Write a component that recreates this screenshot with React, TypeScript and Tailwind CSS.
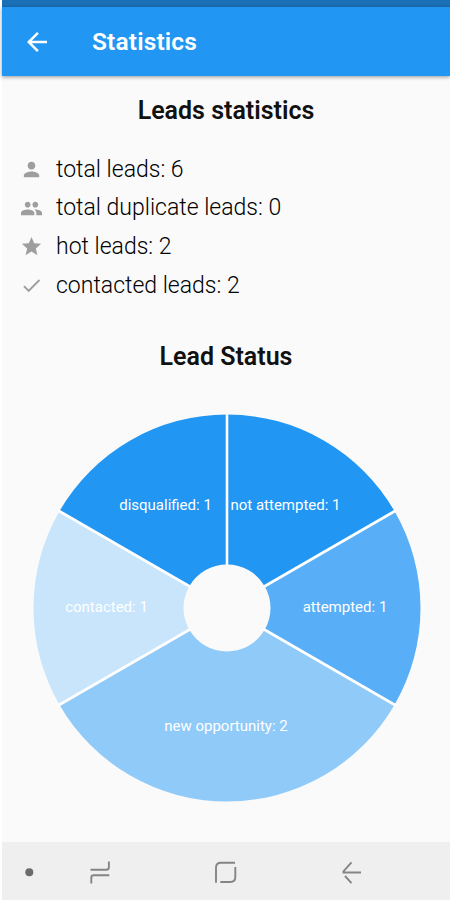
import type { IconType } from "react-icons";
import { MdArrowBack, MdCheck, MdPeople, MdPerson, MdStar } from "react-icons/md";

type Stat = { icon: IconType; label: string; value: number };

const stats: Stat[] = [
  { icon: MdPerson, label: "total leads", value: 6 },
  { icon: MdPeople, label: "total duplicate leads", value: 0 },
  { icon: MdStar, label: "hot leads", value: 2 },
  { icon: MdCheck, label: "contacted leads", value: 2 },
];

const slices = [
  { label: "not attempted", value: 1, color: "#2196f3", x: 285.5, y: 504.5 },
  { label: "attempted", value: 1, color: "#58aef7", x: 345, y: 607 },
  { label: "new opportunity", value: 2, color: "#90caf9", x: 226, y: 726 },
  { label: "contacted", value: 1, color: "#c8e5fc", x: 106.5, y: 607 },
  { label: "disqualified", value: 1, color: "#2196f3", x: 165.5, y: 504.5 },
];

const CX = 227;
const CY = 608;
const OUTER = 193.5;
const INNER = 43.5;

function point(radius: number, turn: number) {
  const a = turn * 2 * Math.PI - Math.PI / 2;
  return `${(CX + radius * Math.cos(a)).toFixed(2)} ${(CY + radius * Math.sin(a)).toFixed(2)}`;
}

function LeadStatusChart() {
  const total = slices.reduce((sum, s) => sum + s.value, 0);
  let turn = 0;
  const parts = slices.map((s) => {
    const start = turn;
    turn += s.value / total;
    return { ...s, start, end: turn };
  });

  return (
    <svg className="block h-[400px] w-full" viewBox="0 408 450 400">
      {parts.map((p) => (
        <path
          key={p.label}
          fill={p.color}
          d={`M${point(OUTER, p.start)} A${OUTER} ${OUTER} 0 0 1 ${point(OUTER, p.end)} L${point(INNER, p.end)} A${INNER} ${INNER} 0 0 0 ${point(INNER, p.start)} Z`}
        />
      ))}
      {parts.map((p) => (
        <path key={p.label} d={`M${point(INNER - 1, p.start)} L${point(OUTER + 1, p.start)}`} stroke="#fff" strokeWidth="2.6" />
      ))}
      {parts.map((p) => (
        <text key={p.label} x={p.x} y={p.y} fill="#fff" textAnchor="middle" dominantBaseline="central" className="text-[15px]">
          {p.label}: {p.value}
        </text>
      ))}
    </svg>
  );
}

function NavigationBar() {
  return (
    <footer className="h-[58px] bg-[#efefef]">
      <svg className="block h-full w-full" viewBox="0 842 448 58" fill="none" stroke="#858585" strokeWidth="1.9" preserveAspectRatio="xMinYMin">
        <circle cx="27.3" cy="872.3" r="4" fill="#6b6b6b" stroke="none" />
        <path d="M88.5 869.7h16q2.4 0 2.4-2.4v-5.8M107.3 875.2h-15.6q-2.4 0-2.4 2.4v5.8" />
        <path d="M233 862.7h-14q-5 0-5 5v15M218.3 882h10q5 0 5-5v-10" />
        <path d="M349.5 862.3l-8.5 9.5M343 876l6.5 7.2M340.5 872.5h18.5" />
      </svg>
    </footer>
  );
}

export default function App() {
  return (
    <div className="h-[900px] w-[450px] overflow-hidden bg-white pl-[2px] font-[Roboto,sans-serif]">
      <div className="flex h-full flex-col bg-[#fafafa]">
        <div className="h-[7px] bg-[#1a70b7]" />
        <header className="flex h-[69px] items-center bg-[#2196f3] pl-5 text-white shadow-[0_1px_4px_rgba(0,0,0,0.4)]">
          <MdArrowBack className="size-[30px]" />
          <h1 className="pl-10 pt-[2px] text-[24.5px] font-semibold tracking-[0.15px]">Statistics</h1>
        </header>

        <main className="flex-1">
          <h2 className="mt-[17px] text-center text-[25px] leading-9 font-semibold text-[#111]">Leads statistics</h2>
          <ul className="mt-[21px] pl-[18px]">
            {stats.map(({ icon: Icon, label, value }) => (
              <li key={label} className="flex h-[38.7px] items-center gap-[13px] text-[23px] font-light text-black">
                <Icon className="size-[23px] text-[#9e9e9e]" />
                <span className="pt-px">
                  {label}: {value}
                </span>
              </li>
            ))}
          </ul>
          <h2 className="mt-[34px] text-center text-[25px] leading-9 font-semibold text-[#111]">Lead Status</h2>
          <div className="-ml-[2px] pt-[33px]">
            <LeadStatusChart />
          </div>
        </main>

        <NavigationBar />
      </div>
    </div>
  );
}
